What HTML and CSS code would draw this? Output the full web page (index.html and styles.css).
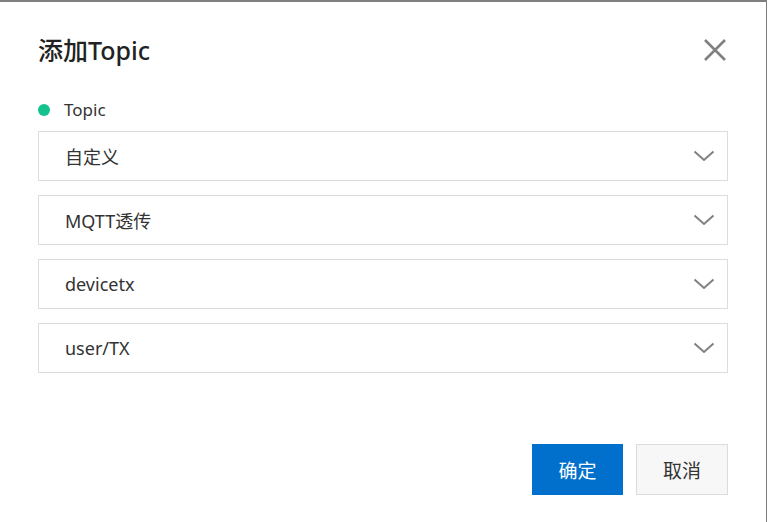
FILE: index.html
```html
<!DOCTYPE html>
<html lang="zh">
<head>
<meta charset="utf-8">
<link rel="stylesheet" href="styles.css">
</head>
<body>
<div class="dialog">
  <div class="header">
    <h1 class="title">添加Topic</h1>
    <button class="close" aria-label="关闭">
      <svg width="24" height="24" viewBox="0 0 24 24"><path d="M2 2L22 22M22 2L2 22" stroke="#808080" stroke-width="2.6" fill="none"/></svg>
    </button>
  </div>
  <div class="label"><span class="dot"></span>Topic</div>
  <div class="fields">
    <div class="select"><span>自定义</span><svg class="chev" width="22" height="12" viewBox="0 0 22 12"><path d="M1.5 1.5L11 10L20.5 1.5" stroke="#808080" stroke-width="2" fill="none"/></svg></div>
    <div class="select"><span>MQTT透传</span><svg class="chev" width="22" height="12" viewBox="0 0 22 12"><path d="M1.5 1.5L11 10L20.5 1.5" stroke="#808080" stroke-width="2" fill="none"/></svg></div>
    <div class="select"><span>devicetx</span><svg class="chev" width="22" height="12" viewBox="0 0 22 12"><path d="M1.5 1.5L11 10L20.5 1.5" stroke="#808080" stroke-width="2" fill="none"/></svg></div>
    <div class="select"><span>user/TX</span><svg class="chev" width="22" height="12" viewBox="0 0 22 12"><path d="M1.5 1.5L11 10L20.5 1.5" stroke="#808080" stroke-width="2" fill="none"/></svg></div>
  </div>
  <div class="footer">
    <button class="btn primary">确定</button>
    <button class="btn secondary">取消</button>
  </div>
</div>
</body>
</html>
```
FILE: styles.css
```css
* { box-sizing: border-box; }
html, body { margin: 0; padding: 0; background: #fff; }
body {
  font-family: "Noto Sans", "Noto Sans CJK SC", sans-serif;
  color: #333;
}
.dialog {
  width: 767px;
  height: 522px;
  border-top: 2px solid #7f7f7f;
  border-right: 1px solid #7f7f7f;
  padding: 32px 38px 0 38px;
  display: flex;
  flex-direction: column;
}
.header {
  display: flex;
  align-items: center;
  justify-content: space-between;
  height: 32px;
}
.title {
  margin: 0;
  font-size: 25px;
  font-weight: 500;
  line-height: 32px;
  color: #222;
}
.close {
  border: 0;
  background: none;
  padding: 0;
  margin-right: 1px;
  width: 24px;
  height: 24px;
  display: flex;
}
.label {
  margin-top: 32px;
  display: flex;
  align-items: center;
  font-size: 17px;
  line-height: 24px;
  color: #333;
}
.dot {
  width: 12px;
  height: 12px;
  border-radius: 50%;
  background: #13c28d;
  margin-right: 14px;
}
.fields {
  margin-top: 9px;
  display: flex;
  flex-direction: column;
  gap: 14px;
}
.select {
  height: 50px;
  border: 1px solid #dcdcdc;
  display: flex;
  align-items: center;
  justify-content: space-between;
  padding: 0 12px 0 26px;
  font-size: 18px;
  color: #333;
}
.footer {
  margin-top: 71px;
  display: flex;
  justify-content: flex-end;
  gap: 13px;
}
.btn {
  width: 91px;
  height: 51px;
  font-family: inherit;
  font-size: 19px;
  border: 1px solid transparent;
  padding: 0;
}
.primary {
  background: #0070cc;
  color: #fff;
}
.secondary {
  width: 92px;
  background: #f7f7f7;
  border-color: #dcdcdc;
  color: #333;
}
```
